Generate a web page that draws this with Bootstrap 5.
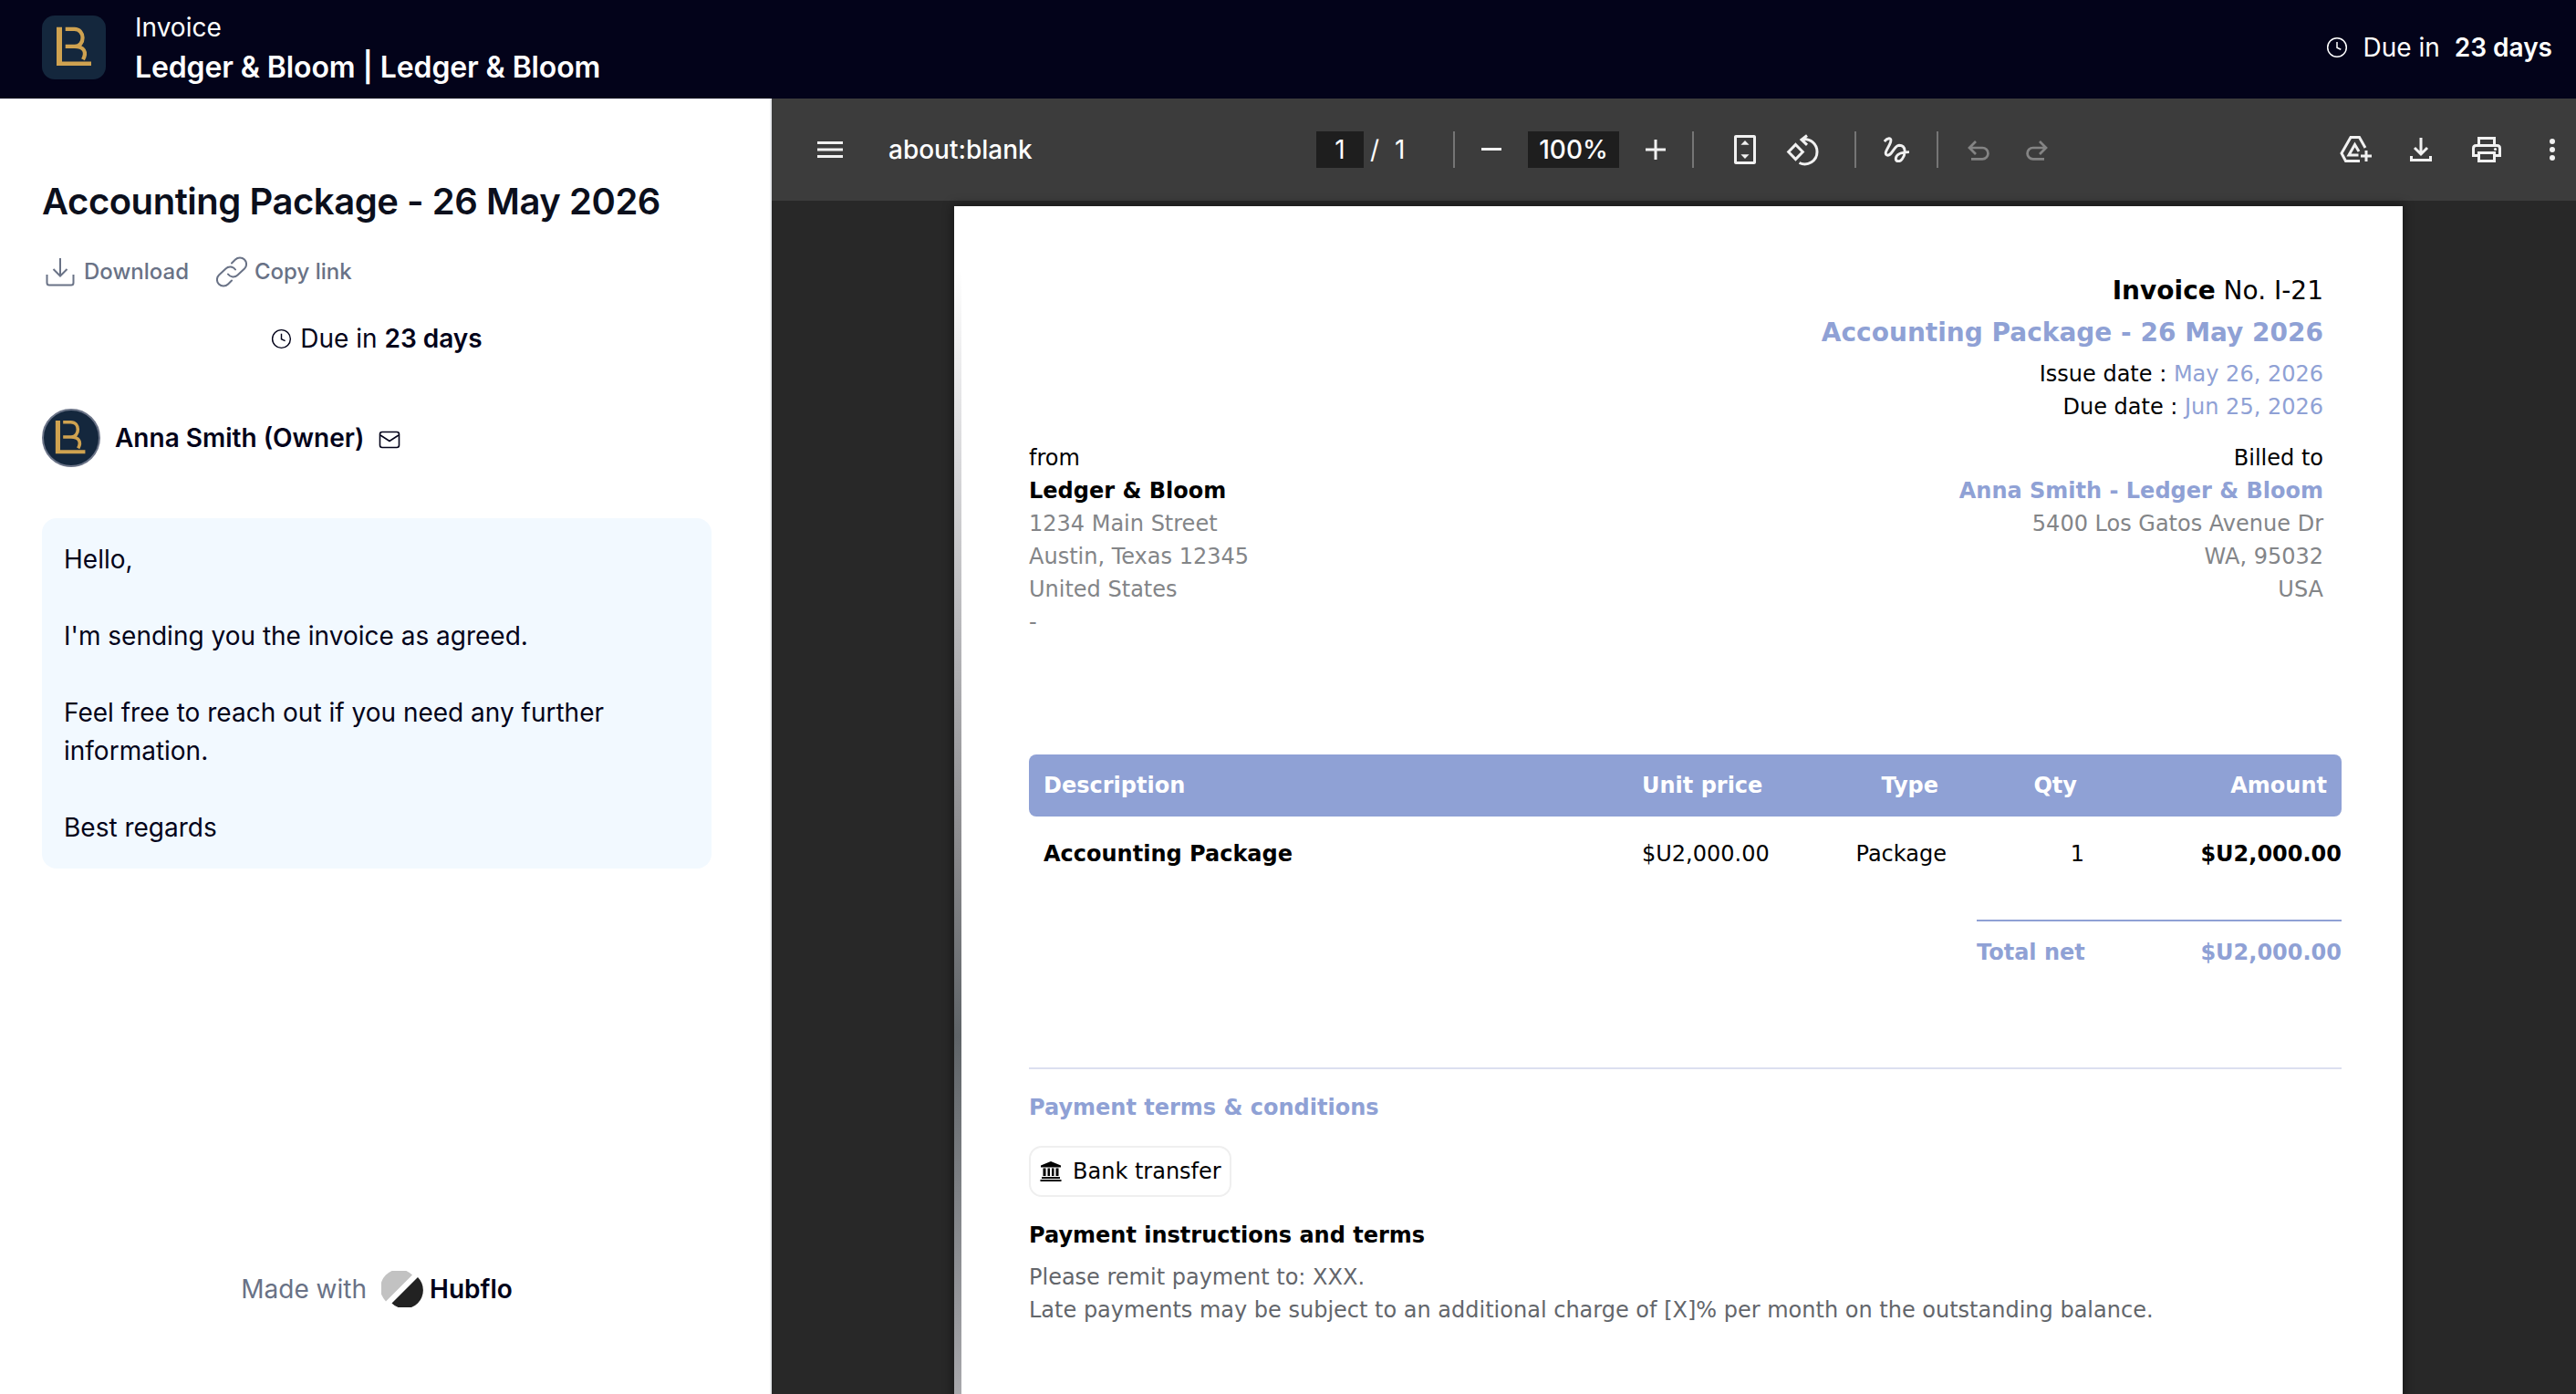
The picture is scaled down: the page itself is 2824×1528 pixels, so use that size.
<!DOCTYPE html>
<html lang="en">
<head>
<meta charset="utf-8">
<title>Invoice</title>
<link rel="stylesheet" href="https://cdn.jsdelivr.net/npm/bootstrap@5.3.0/dist/css/bootstrap.min.css">
<style>
body{font-family:Inter,"Liberation Sans",sans-serif;font-size:28px;line-height:42px;color:#03031a;height:1528px;overflow:hidden;background:#fff}
svg{display:block;flex:none}
.topbar{height:108px;background:#03031a;color:#fff;padding:0 26px 0 46px}
.brandtile{width:70px;height:70px;border-radius:14px;background:#14273d;margin-top:-5px}
.toptext{margin-left:32px;line-height:44px;margin-top:-5px}
.toptext .org{font-size:32px;font-weight:600;letter-spacing:-.12px}
.duetop{margin-top:-4px;gap:16px}
.side{width:846px;flex:none;border-right:2px solid #e9ebee;padding:0 64px 0 46px}
.side h1{font-size:40px;font-weight:600;line-height:48px;color:#0b0f1c;margin:89px 0 0;letter-spacing:-.46px;white-space:nowrap}
.acts{color:#697286;font-size:24px;font-weight:500;line-height:36px;margin-top:35px;padding-left:4px}
.duerow{margin-top:34px;height:42px}
.who{margin-top:56px;height:64px;font-weight:600}
.avatar{width:64px;height:64px;border:2px solid #6b7488;border-radius:50%;background:#14273d;overflow:hidden}
.msg{background:#f2f9ff;border-radius:16px;margin-top:56px;height:384px;padding:24px 24px;white-space:pre-line}
.made{margin-top:440px;color:#697286}
.viewer{background:#282828;min-width:0}
.tools{height:112px;background:#3c3c3c;color:#fff;font-weight:500}
.tools svg{fill:#f1f1f1}
.tools .dim{opacity:.4;margin-top:2px}
.inbox{background:#1e1e1e;height:40px;line-height:40px;text-align:center;flex:none}
.fixw{flex:none}
.sep{width:2px;height:40px;background:#757575;flex:none}
.sheet{width:1588px;margin:6px 0 0 200px;height:1310px;background:#fff;box-shadow:0 0 10px 2px rgba(0,0,0,.4);font-family:"DejaVu Sans",sans-serif;font-size:24px;line-height:36px;color:#000}
.strip{width:8px;flex:none;background:linear-gradient(#fff 0,#fff 70px,#e0e0e2 234px,#b4b4b7 480px,#88888b 714px,#5f6468 910px,#a8a8ac 1302px)}
.inv{padding:70px 67px 0 74px}
.blue{color:#8fa1d5}
.dim2{color:#838588}
.dim3{color:#63666b}
.head28{font-size:28px;line-height:46px}
.parties{margin-right:20px;margin-top:20px}
.invtable{margin-top:127px;table-layout:fixed;width:1439px}
.invtable td,.invtable th{padding:0;white-space:nowrap}
.invtable th{background:#8fa1d5;color:#fff;height:68px;border:0}
.invtable th:first-child{border-radius:8px 0 0 8px;padding-left:16px}
.invtable th:last-child{border-radius:0 8px 8px 0;padding-right:16px}
.total{width:400px;border-top:2px solid #8fa1d5;margin-top:31px;padding-top:16px}
.rule{height:2px;background:#dcdff0;margin-top:108px}
.bank{width:222px;height:56px;border:2px solid #efefef;border-radius:14px;padding-left:10px;margin-top:24px}
</style>
<script src="https://cdn.jsdelivr.net/npm/bootstrap@5.3.0/dist/js/bootstrap.bundle.min.js"></script>
</head>
<body class="d-flex flex-column">
<svg width="0" height="0" class="position-absolute">
<symbol id="mono" viewBox="0 0 70 70"><path fill="#cfa250" d="M16 12.700H22V50.500H54V55H16Z"/><path fill="none" stroke="#cfa250" stroke-width="4.200" d="M25.700 14.800H35.500C47.500 14.800 47.500 33.800 36 33.800H25.700M36 33.800C46 34 49.500 40 45 48.300"/></symbol>
<symbol id="clk" viewBox="0 0 24 24"><g fill="none" stroke="currentColor" stroke-width="1.500"><circle cx="12" cy="12" r="10.300"/><path d="M12 6V12.200L16.300 14.200"/></g></symbol>
</svg>
<header class="topbar d-flex align-items-center flex-shrink-0">
<div class="brandtile"><svg width="70" height="70"><use href="#mono"/></svg></div>
<div class="toptext"><div>Invoice</div><div class="org">Ledger &amp; Bloom | Ledger &amp; Bloom</div></div>
<div class="duetop ms-auto d-flex align-items-center"><svg width="24" height="24"><use href="#clk"/></svg><span>Due in</span><span class="fw-semibold">23 days</span></div>
</header>
<div class="d-flex flex-grow-1">
<aside class="side">
<h1>Accounting Package - 26 May 2026</h1>
<div class="acts d-flex align-items-center">
<svg width="32" height="32" viewBox="0 0 32 32" fill="none" stroke="#697286" stroke-width="2"><path d="M16 1V20M8.500 13L16 20.500L23.500 13M1.500 19V28Q1.500 30.500 4 30.500H28Q30.500 30.500 30.500 28V19"/></svg>
<span style="margin-left:10px">Download</span>
<svg style="margin-left:30px" width="34" height="34" viewBox="0 0 34 34" fill="none" stroke="#697286" stroke-width="2" stroke-linecap="round"><path d="M17 7.500L21 3.500A7 7 0 0 1 31 13.500L23.500 20.500A7 7 0 0 1 13 19.500M17 26.500L13 30.500A7 7 0 0 1 3 20.500L10.500 13.500A7 7 0 0 1 21 14.500"/></svg>
<span style="margin-left:8px">Copy link</span>
</div>
<div class="duerow d-flex justify-content-center align-items-center"><svg width="23" height="23"><use href="#clk"/></svg><span style="margin-left:9px">Due in <span class="fw-semibold">23 days</span></span></div>
<div class="who d-flex align-items-center">
<div class="avatar"><svg width="60" height="60" viewBox="1 0 70 70"><use href="#mono" width="70" height="70"/></svg></div>
<span style="margin-left:16px">Anna Smith (Owner)</span>
<svg style="margin-left:16px;margin-top:4px" width="24" height="20" viewBox="0 0 24 20" fill="none" stroke="#03031a" stroke-width="1.600"><rect x="1.500" y="1.500" width="21" height="17" rx="2.500"/><path d="M2 5L12 11.500L22 5"/></svg>
</div>
<div class="msg">Hello,

I'm sending you the invoice as agreed.

Feel free to reach out if you need any further information.

Best regards</div>
<div class="made d-flex justify-content-center align-items-center"><span>Made with</span>
<svg style="margin:0 7px 0 16px" width="46" height="40" viewBox="0 0 46 40"><path d="M5 33.500A20 20 0 0 1 34 4.500Z" fill="#c2c2c2"/><path d="M40 7A20 20 0 0 1 11.500 35.500Z" fill="#222"/></svg>
<span class="fw-semibold" style="color:#03031a">Hubflo</span></div>
</aside>
<main class="viewer flex-grow-1">
<div class="tools d-flex align-items-center">
<svg style="margin-left:50px" width="28" height="18" viewBox="0 0 28 18"><path d="M0 0H28V3H0ZM0 7.500H28V10.500H0ZM0 15H28V18H0Z"/></svg>
<span class="fixw" style="margin-left:50px;width:469px">about:blank</span>
<div class="inbox fw-normal" style="width:52px">1</div><span class="fixw fw-normal" style="margin-left:7px;width:27px">/</span><span class="fixw fw-normal" style="width:64px">1</span>
<div class="sep"></div>
<svg style="margin-left:29px" width="22" height="4"><path d="M0 0H22V3H0Z"/></svg>
<div class="inbox" style="width:100px;margin-left:29px">100%</div>
<svg style="margin-left:29px" width="22" height="22"><path d="M9.500 0H12.500V9.500H22V12.500H12.500V22H9.500V12.500H0V9.500H9.500Z"/></svg>
<div class="sep" style="margin-left:29px"></div>
<svg style="margin-left:32px" width="48" height="48" viewBox="0 0 24 24"><path d="M17 4H7c-.55 0-1 .45-1 1v14c0 .55.45 1 1 1h10c.55 0 1-.45 1-1V5c0-.55-.45-1-1-1zm-.500 14.500h-9v-13h9zM12 7l2.300 2.400H9.700zM12 17l2.300-2.400H9.700z"/></svg>
<svg style="margin-left:16px" width="48" height="48" viewBox="0 0 48 48"><g fill="none" stroke="#f1f1f1" stroke-width="3"><path d="M15.500 18.500L23.300 26.500L15.500 34.500L7.700 26.500Z"/><path d="M22 12.800C32 11.500 39 18 39 26.500C39 36 29 43 19.500 38.500M28 8.500L22 13.200L28 18.800"/></g></svg>
<div class="sep" style="margin-left:32px"></div>
<svg style="margin-left:30px" width="28" height="28" viewBox="0 0 28 28"><path fill="none" stroke="#f1f1f1" stroke-width="2.900" d="M.800 5C3.500 1.500 9.500 -.500 7.500 6C6 11 -.500 18 3.500 20C9 22 11 9.500 17 9.300C25 9.500 24 19 20.500 24C18 28 13 27.500 13.300 23.500C14 18.500 19 16.800 28 16.600"/></svg>
<div class="sep" style="margin-left:30px"></div>
<svg class="dim" style="margin-left:32px" width="24" height="22" viewBox="0 0 24 22"><path fill="none" stroke="#f1f1f1" stroke-width="2.700" d="M4 20.300H16.300A6.100 6.100 0 0 0 16.300 8H2M9 1L2 8L9 15"/></svg>
<svg class="dim" style="margin-left:40px" width="24" height="22" viewBox="0 0 24 22"><path fill="none" stroke="#f1f1f1" stroke-width="2.700" d="M20 20.300H7.700A6.100 6.100 0 0 1 7.700 8H22M15 1L22 8L15 15"/></svg>
<svg style="margin-left:320px" width="36" height="32" viewBox="0 0 36 32"><g fill="none" stroke="#f1f1f1" stroke-width="3"><path d="M28 14L21.500 2.500H12L2 20L6.500 28.500H22M20.500 22H10L16.500 10.500L21 18"/><path d="M29 17V29M23 23H35"/></g></svg>
<svg style="margin-left:41px" width="24" height="26" viewBox="0 0 24 26"><path fill="none" stroke="#f1f1f1" stroke-width="3" d="M12 0V18M5 11L12 18L19 11M1.500 20V24.500H22.500V20"/></svg>
<svg style="margin-left:44px" width="32" height="28" viewBox="0 0 32 28"><g fill="none" stroke="#f1f1f1" stroke-width="3"><path d="M7.500 9V1.500H24.500V9M7.500 20.500H1.500V12.500Q1.500 9.500 4.500 9.500H27.500Q30.500 9.500 30.500 12.500V20.500H24.500"/><path d="M7.500 17.500H24.500V26.500H7.500Z"/></g><circle cx="25.500" cy="13.500" r="1.600"/></svg>
<svg style="margin-left:53px" width="6" height="24"><circle cx="3" cy="3" r="3"/><circle cx="3" cy="12" r="3"/><circle cx="3" cy="21" r="3"/></svg>
</div>
<div class="sheet d-flex">
<div class="strip"></div>
<div class="inv flex-grow-1">
<div class="text-end parties mt-0">
<div class="head28"><b>Invoice</b> No. I-21</div>
<div class="head28 blue fw-bold">Accounting Package - 26 May 2026</div>
<div class="mt-1">Issue date : <span class="blue">May 26, 2026</span></div>
<div>Due date : <span class="blue">Jun 25, 2026</span></div>
</div>
<div class="d-flex justify-content-between parties">
<div class="dim2"><div class="text-black">from</div><b class="text-black">Ledger &amp; Bloom</b><br>1234 Main Street<br>Austin, Texas 12345<br>United States<br>-</div>
<div class="dim2 text-end"><div class="text-black">Billed to</div><b class="blue">Anna Smith - Ledger &amp; Bloom</b><br>5400 Los Gatos Avenue Dr<br>WA, 95032<br>USA</div>
</div>
<table class="invtable">
<colgroup><col style="width:672px"><col style="width:200px"><col style="width:134px"><col style="width:151px"><col></colgroup>
<thead><tr><th>Description</th><th>Unit price</th><th class="text-end" style="padding-right:9px">Type</th><th class="text-end" style="padding-right:8px">Qty</th><th class="text-end">Amount</th></tr></thead>
<tbody><tr style="height:82px"><td class="fw-bold" style="padding-left:16px">Accounting Package</td><td>$U2,000.00</td><td class="text-end">Package</td><td class="text-end">1</td><td class="text-end fw-bold">$U2,000.00</td></tr></tbody>
</table>
<div class="total ms-auto d-flex justify-content-between blue fw-bold"><span>Total net</span><span>$U2,000.00</span></div>
<div class="rule"></div>
<div class="blue fw-bold" style="margin-top:24px">Payment terms &amp; conditions</div>
<div class="bank d-flex align-items-center"><svg width="24" height="22" viewBox="0 0 24 22"><path d="M12 0L23 4.500V6.500H1V4.500ZM3.500 7.500H6.500V16H3.500ZM8.500 7.500H11V16H8.500ZM13 7.500H15.500V16H13ZM17.500 7.500H20.500V16H17.500ZM2 17H22V19H2ZM.500 20H23.500V22H.500Z"/></svg><span class="text-nowrap" style="margin-left:12px">Bank transfer</span></div>
<div class="fw-bold" style="margin-top:24px">Payment instructions and terms</div>
<div class="dim3" style="margin-top:10px">Please remit payment to: XXX.<br>Late payments may be subject to an additional charge of [X]% per month on the outstanding balance.</div>
</div>
</div>
</main>
</div>
</body>
</html>
